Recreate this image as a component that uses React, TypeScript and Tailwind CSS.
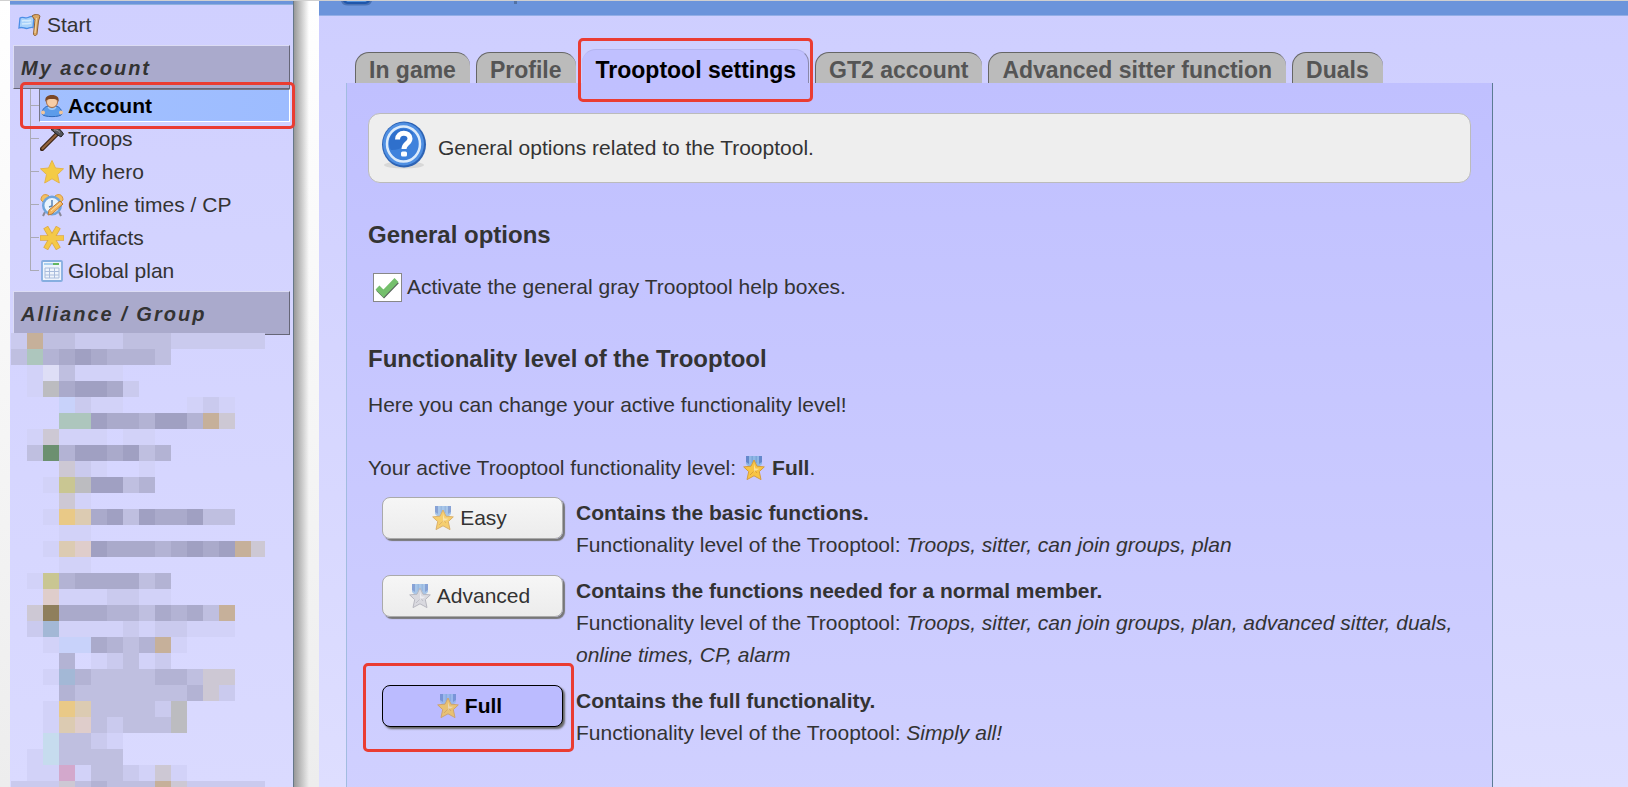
import { useState } from "react"

const menuItems = [
  { name: "Account", icon: "user" },
  { name: "Troops", icon: "hammer" },
  { name: "My hero", icon: "star" },
  { name: "Online times / CP", icon: "clock" },
  { name: "Artifacts", icon: "asterisk" },
  { name: "Global plan", icon: "table" },
]

const tabs = ["In game", "Profile", "Trooptool settings", "GT2 account", "Advanced sitter function", "Duals"]

const levels = [
  { name: "Easy", tone: "gold", title: "Contains the basic functions.", features: "Troops, sitter, can join groups, plan" },
  {
    name: "Advanced",
    tone: "silver",
    title: "Contains the functions needed for a normal member.",
    features: "Troops, sitter, can join groups, plan, advanced sitter, duals, online times, CP, alarm",
  },
  { name: "Full", tone: "gold", title: "Contains the full functionality.", features: "Simply all!" },
]

// Pixelated group menu: one string per row, one letter per 16px cell
const palette: Record<string, string> = {
  a: "#a0a0c2",
  b: "#aaaacb",
  c: "#b3b3d4",
  d: "#bfbfe0",
  e: "#cacaee",
  f: "#d2d2f8",
  T: "#c6b09a",
  s: "#cdc8d4",
  g: "#adc6bd",
  G: "#6c9070",
  y: "#c9c692",
  o: "#e9c987",
  O: "#dccbb2",
  p: "#dfcdcb",
  w: "#dedef6",
  u: "#a3b8d6",
  m: "#c6dcee",
  l: "#c8d2fa",
  k: "#bcbcc0",
  r: "#d3a8cc",
  n: "#8f7f5c",
}

const mosaic = [
  "eTddeeedddeeeeee",
  "dgcbabcccd......",
  ".fwdfff.........",
  ".fkbaabe........",
  "...leff....fef..",
  "...ggabbcaacTs..",
  ".fsfff.ff.......",
  ".dGcaabadc......",
  "...sef..f.......",
  "..fykaadc.......",
  "...sf...........",
  "..foObadabbadd..",
  "...ff...........",
  "..fOpabbbcbabaTs",
  "...ff...........",
  ".fycbbbbdc......",
  "..pfffeeff......",
  ".snbbbccdbcbdT..",
  ".euffffefeefff..",
  "..fllbcdcTf.....",
  "...c.fedfe......",
  "..fucddddccdss..",
  "...cdddddddcse..",
  "..foOddddek.....",
  "..fOpdedddk.....",
  "..mddef.........",
  ".fmdddd.........",
  ".ffrfddefsf.....",
  "eeesdcdddTseeeee",
]

const Medal = ({ tone, faded }: { tone: string; faded?: boolean }) => {
  const gold = tone === "gold"
  return (
    <svg viewBox="0 0 22 24" className={`h-6 w-[22px] shrink-0 ${faded ? "opacity-75" : ""}`} aria-hidden="true">
      <path d="M3 0h16v8l-3 3H6L3 8z" fill="#8fb8e6" />
      <path d="M3 0h3v8L3 6zM16 0h3v6l-3 2z" fill="#6488cc" />
      <path d="M8.500 0h1.500v7H8.500zM12.500 0h1.500v7h-1.500z" fill="#7da6da" />
      <path
        d="M11 4l3 6.200 7.300.7-5 4.700 1.700 8-7-3.800-7 3.800 1.700-8-5-4.700L8 10.200z"
        fill={gold ? "#f8c444" : "#d2d2da"}
        stroke={gold ? "#d49c40" : "#a5a5b0"}
        strokeLinejoin="round"
      />
      <path d="M11 8l1.500 4.500 4 .3-5.500 3z" fill={gold ? "#fbe19a" : "#ececf2"} />
      <path d="M7 19l3.500-3.500M14 17l-2-2.500" stroke={gold ? "#dba13a" : "#b0b0ba"} />
    </svg>
  )
}

const MenuIcon = ({ name }: { name: string }) => (
  <svg viewBox="0 0 24 24" className="size-6 shrink-0" aria-hidden="true">
    {name === "flag" && (
      <>
        <path d="M2 5c3-2 5 1 8-.5 2-1 4-1.500 6-1l-1 11c-3-.8-4 1-6.500 1S4 13.500 1 15z" fill="#a9d2fb" stroke="#4c8fe6" strokeWidth="1.300" />
        <path d="M4 8c3-1.500 5 1 9-1M4 11c3-1 5 .5 9-1" stroke="#d3eafd" strokeWidth="1.500" fill="none" />
        <path d="M14 3c2-2 7-2 8 0l-1.500 5-1.500 13c-.5 2-3.500 2-3.500 0L17 7z" fill="#dba765" stroke="#8f6235" />
        <path d="M18.500 5l-1.500 15" stroke="#f4d39e" strokeWidth="1.200" />
      </>
    )}
    {name === "user" && (
      <>
        <path d="M2 20c0-4 2-7 6-8h8c4 1 6 4 6 8-1 3.500-19 3.500-20 0z" fill="#5c9cea" stroke="#2f68ba" />
        <path d="M8 13c2 3 6 3 8 0" stroke="#a3cbf8" fill="none" strokeWidth="1.500" />
        <circle cx="3" cy="18.500" r="2" fill="#f2c69c" />
        <circle cx="21" cy="18.500" r="2" fill="#f2c69c" />
        <circle cx="12" cy="8" r="5.500" fill="#f6cda6" stroke="#a96f45" />
        <path d="M5.500 8c-1-5 2-7 6.500-7s7.500 2 6.500 7c-1-3-3.500-3-6.500-3s-5.500 0-6.500 3z" fill="#7a4727" />
      </>
    )}
    {name === "hammer" && (
      <>
        <path d="M2 22L17 7" stroke="#3d2618" strokeWidth="4.500" strokeLinecap="round" />
        <path d="M2.500 21.500L17 7" stroke="#93643d" strokeWidth="2.200" strokeLinecap="round" />
        <path d="M11 2.500c4-2 7-2 10 1l2.500 3.500-2.500 3-4-2.500z" fill="#55555a" stroke="#222" />
        <path d="M14 3c2-.5 4 .5 6 2.500" stroke="#a0a0a5" fill="none" />
      </>
    )}
    {name === "star" && (
      <path
        d="M12 .5l3.500 7.500 8 .8-6 5.700 1.800 8.500-7.300-4.200L4.700 23l1.800-8.500-6-5.700 8-.8z"
        fill="#f4cb45"
        stroke="#e4b44c"
        strokeLinejoin="round"
      />
    )}
    {name === "clock" && (
      <>
        <path d="M5 19l-2 4M19 19l2 4" stroke="#888899" strokeWidth="2" />
        <path d="M1 7c0-5 4-7 8-4L3 9zM23 7c0-5-4-7-8-4l6 6z" fill="#f3c063" stroke="#d8973e" />
        <circle cx="12" cy="12.500" r="8.800" fill="#eaf4fd" stroke="#6fa4dc" strokeWidth="2.500" />
        <path d="M12 7v6l-3 1" stroke="#5b83b5" fill="none" strokeWidth="1.500" />
        <path d="M8 22l1-5L20 8l3 3-11 10z" fill="#f3b55e" stroke="#bd7a38" />
        <path d="M11 18l9.500-8" stroke="#fce0a6" />
      </>
    )}
    {name === "asterisk" && (
      <>
        <path d="M7 3.500L17 20.500M17 3.500L7 20.500M2.500 12h19" stroke="#dda947" strokeWidth="5.500" strokeLinecap="square" />
        <path d="M7 3.500L17 20.500M17 3.500L7 20.500M2.500 12h19" stroke="#f4c948" strokeWidth="4" strokeLinecap="square" />
      </>
    )}
    {name === "table" && (
      <>
        <rect x="2" y="2" width="20" height="20" rx="1" fill="#eef4fc" stroke="#86aee0" strokeWidth="1.800" />
        <path d="M4 5h15" stroke="#a9cfee" strokeWidth="2" />
        <path d="M13 5h6" stroke="#62b562" strokeWidth="2" />
        <path d="M5 9h14v10H5zM5 12.500h14M5 16h14M9.500 9v10M14.500 9v10" stroke="#a9bcdc" fill="none" />
      </>
    )}
  </svg>
)

const HelpIcon = () => (
  <svg viewBox="0 0 46 50" className="mb-1.5 h-[50px] w-[46px] shrink-0" aria-hidden="true">
    <ellipse cx="23" cy="45" rx="20" ry="3.500" fill="#d8d8d8" />
    <ellipse cx="23" cy="24.500" rx="22" ry="23" fill="#2d63b4" />
    <ellipse cx="22.500" cy="24" rx="20.500" ry="21.500" fill="#4f8fe2" />
    <ellipse cx="22.500" cy="24" rx="16.500" ry="17.500" fill="#3f82dc" stroke="#dcebfb" strokeWidth="2.500" />
    <path d="M10 30a14 14 0 0 1 22-17 22 22 0 0 1-22 17z" fill="#2f70cc" />
    <path d="M16.500 19.500c0-8.500 12.500-8 12.500-1 0 5-6 5-6 10.500" fill="none" stroke="#fff" strokeWidth="5" />
    <rect x="20" y="31.500" width="6" height="5" rx="1.500" fill="#fff" />
  </svg>
)

const Marker = ({ className }: { className: string }) => (
  <div className={`pointer-events-none absolute z-10 rounded-[5px] border-3 border-[#ea3c32] ${className}`} />
)

const MenuHeading = ({ children }: { children: string }) => (
  <h2 className="mx-[3px] flex h-11 shrink-0 items-center border border-t-[#dcdcf4] border-r-[#666677] border-b-[#666677] border-l-[#dcdcf4] bg-[#aaaacc] pt-px pl-[7px] text-xl font-bold italic tracking-[2px]">
    {children}
  </h2>
)

const Sidebar = () => (
  <aside className="flex w-[284px] shrink-0 flex-col border-r border-r-[#667788] bg-linear-to-b from-[#d0d0ff] to-[#dadaff]">
    <div className="h-1 shrink-0 border-b border-[#8fb0dc] bg-[#6b94db]" />
    <a href="#start" className="flex h-10 shrink-0 items-center gap-[5px] pl-2">
      <MenuIcon name="flag" />
      Start
    </a>
    <MenuHeading>My account</MenuHeading>
    <nav className="relative mb-1 shrink-0">
      <ul className="ml-5">
        {menuItems.map((item, i) => (
          <li key={item.name} className="flex h-[33px]">
            {/* Tree branch */}
            <div className="flex w-[9px] flex-col">
              <div className="h-[17px] border-b border-l border-[#aaaab4]" />
              {i < menuItems.length - 1 && <div className="flex-1 border-l border-[#aaaab4]" />}
            </div>
            <a
              href={`#${item.icon}`}
              className={
                i === 0
                  ? "mr-[3px] flex flex-1 items-center gap-1 border border-t-[#777788] border-r-white border-b-white border-l-[#777788] bg-linear-to-r from-[#a2c0ff] to-[#9dbcff] font-bold text-black"
                  : "mr-[3px] flex flex-1 items-center gap-1 border border-transparent"
              }
            >
              <MenuIcon name={item.icon} />
              {item.name}
            </a>
          </li>
        ))}
      </ul>
      <Marker className="-top-[7px] left-2.5 -right-0.5 h-[47px]" />
    </nav>
    <MenuHeading>Alliance / Group</MenuHeading>
    <svg viewBox="0 0 254 464" className="-mt-0.5 ml-px h-[464px] w-[254px] shrink-0" shapeRendering="crispEdges" aria-hidden="true">
      {mosaic.map((row, y) =>
        row
          .split("")
          .map((cell, x) =>
            cell === "." ? null : (
              <rect key={`${x}-${y}`} x={x * 16} y={y * 16} width="16" height="16" fill={palette[cell]} />
            ),
          ),
      )}
    </svg>
  </aside>
)

const Tabs = () => (
  <div className="ml-9 flex items-end gap-1.5 text-[23px] leading-6 font-bold">
    {tabs.map((tab) =>
      tab === "Trooptool settings" ? (
        <div key={tab} className="relative">
          <button className="block h-[34px] rounded-t-[14px] border-t border-r border-t-[#b4b4f0] border-r-[#8888aa] bg-[#c0c0ff] pt-[7px] pr-3 pl-[14px] text-black">
            {tab}
          </button>
          <Marker className="-inset-x-1 -top-[11px] h-16" />
        </div>
      ) : (
        <button
          key={tab}
          className="h-[31px] rounded-t-[14px] border-t border-l border-[#666666] bg-[#bbbbbb] pt-1 pr-[14px] pl-[13px] text-[#555555]"
        >
          {tab}
        </button>
      ),
    )}
  </div>
)

const App = () => {
  const [helpBoxes, setHelpBoxes] = useState(true)

  return (
    <div className="flex h-screen overflow-hidden border-t border-[#d0d0d0] bg-linear-to-b from-white to-[#ededed] pl-2.5 font-['Liberation_Sans',Arial,sans-serif] text-[21px] text-[#333333]">
      <Sidebar />
      <div className="w-[25px] shrink-0 bg-linear-to-r from-[#999999] via-transparent via-60% to-transparent" />

      <main className="min-w-0 flex-1 bg-linear-to-b from-[#ceceff] to-[#dedeff]">
        <header className="h-[15px] border-b border-[#93aee6] bg-[#6b94db] pl-[22px]">
          <svg viewBox="0 0 180 14" className="h-3.5 w-[180px]" aria-hidden="true">
            <path d="M0 0c1 3 3 4.500 7 4.500h17c4 0 6-1.500 7-4.500z" fill="#4a72b4" />
            <path d="M2 0c1 2 3 3 5 3h17c2 0 4-1 5-3z" fill="#1f56aa" />
            <path d="M5 0c1 1 2 1 3 1h15c1 0 2 0 3-1z" fill="#4f8fdc" />
            <path d="M173 0h3v3h-3z" fill="#5272a4" />
          </svg>
        </header>

        <div className="pt-[33px]">
          <Tabs />
          <section className="mr-[135px] ml-[27px] flex min-h-[720px] flex-col border-r border-l border-r-[#5c7c94] border-l-[#a2bce0] bg-linear-to-b from-[#c0c0ff] to-[#d0d0ff] px-[21px] pt-[30px]">
            <div className="flex h-[70px] shrink-0 items-center gap-[11px] rounded-xl border border-[#bbbbbb] bg-[#eeeeee] px-3">
              <HelpIcon />
              <p>General options related to the Trooptool.</p>
            </div>

            <h3 className="mt-8 text-2xl leading-10 font-bold">General options</h3>
            <label className="mt-4 ml-[5px] flex items-center gap-[5px] leading-8">
              <span className="grid">
                <input
                  type="checkbox"
                  checked={helpBoxes}
                  onChange={() => setHelpBoxes(!helpBoxes)}
                  className="col-start-1 row-start-1 size-[29px] appearance-none border border-[#888888] bg-white"
                />
                {helpBoxes && (
                  <svg viewBox="0 0 29 29" className="pointer-events-none col-start-1 row-start-1 size-[29px]" aria-hidden="true">
                    <path d="M5 16l6 6L24 8.500" fill="none" stroke="#55605a" strokeWidth="5" />
                    <path d="M4.500 14.500l6 6L23.500 7" fill="none" stroke="#74bf6c" strokeWidth="5.500" />
                  </svg>
                )}
              </span>
              Activate the general gray Trooptool help boxes.
            </label>

            <h3 className="mt-9 text-2xl leading-10 font-bold">Functionality level of the Trooptool</h3>
            <p className="mt-2.5 leading-8">Here you can change your active functionality level!</p>
            <p className="mt-[31px] flex items-center leading-8">
              Your active Trooptool functionality level:
              <span className="mx-[7px]">
                <Medal tone="gold" />
              </span>
              <b>Full</b>.
            </p>

            <div className="mt-[13px] ml-3.5 flex flex-col gap-3.5">
              {levels.map((level) => (
                <div key={level.name} className="flex items-start gap-[13px]">
                  <div className="relative shrink-0">
                    <button
                      className={
                        level.name === "Full"
                          ? "flex h-[42px] w-[181px] items-center justify-center gap-1.5 rounded-lg border border-black bg-[#bbbbff] pr-1.5 font-bold text-black shadow-[2px_2px_2px_#666666]"
                          : "flex h-[42px] w-[181px] items-center justify-center gap-1.5 rounded-lg border border-[#aaaaaa] bg-linear-to-b from-[#f6f6f6] to-[#ececec] pr-1.5 shadow-[2px_2px_1px_#777777]"
                      }
                    >
                      <Medal tone={level.tone} faded />
                      {level.name}
                    </button>
                    {level.name === "Full" && <Marker className="-top-[22px] -right-[11px] -left-[19px] h-[89px]" />}
                  </div>
                  <div className="leading-8">
                    <p className="font-bold">{level.title}</p>
                    <p>
                      Functionality level of the Trooptool: <i>{level.features}</i>
                    </p>
                  </div>
                </div>
              ))}
            </div>
          </section>
        </div>
      </main>
    </div>
  )
}

export default App
